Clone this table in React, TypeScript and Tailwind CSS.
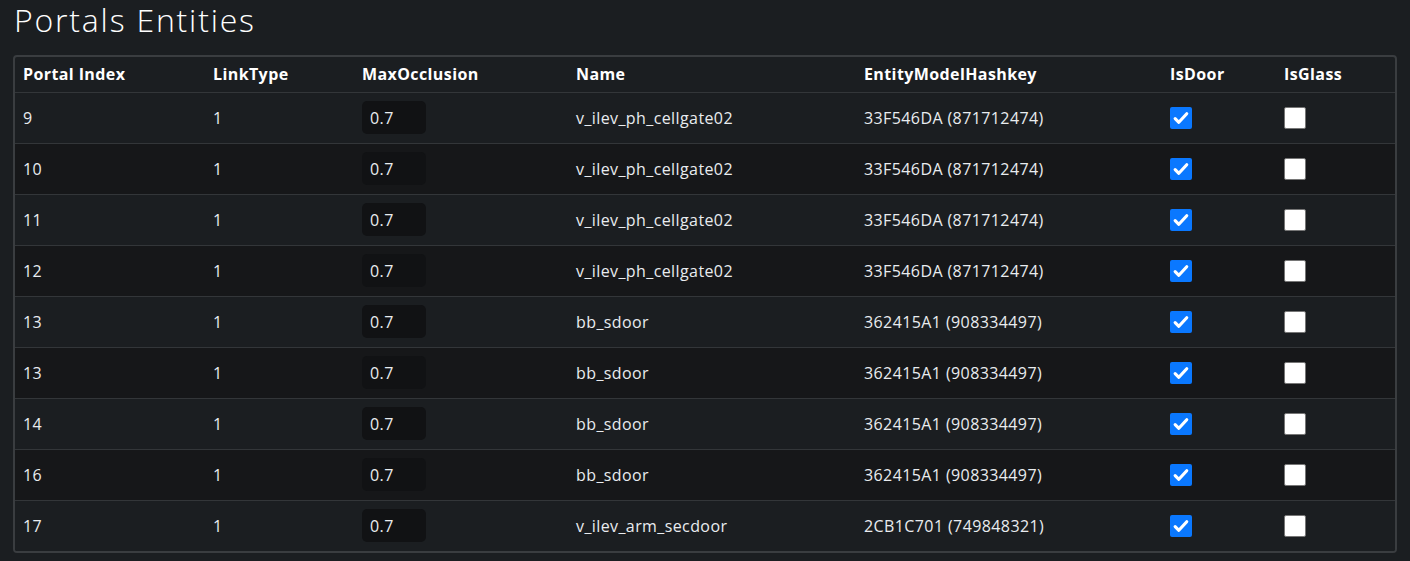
import React from 'react';

type Row = {
  index: number;
  linkType: number;
  occlusion: string;
  name: string;
  hash: string;
  isDoor: boolean;
  isGlass: boolean;
};

const rows: Row[] = [
  { index: 9, linkType: 1, occlusion: '0.7', name: 'v_ilev_ph_cellgate02', hash: '33F546DA (871712474)', isDoor: true, isGlass: false },
  { index: 10, linkType: 1, occlusion: '0.7', name: 'v_ilev_ph_cellgate02', hash: '33F546DA (871712474)', isDoor: true, isGlass: false },
  { index: 11, linkType: 1, occlusion: '0.7', name: 'v_ilev_ph_cellgate02', hash: '33F546DA (871712474)', isDoor: true, isGlass: false },
  { index: 12, linkType: 1, occlusion: '0.7', name: 'v_ilev_ph_cellgate02', hash: '33F546DA (871712474)', isDoor: true, isGlass: false },
  { index: 13, linkType: 1, occlusion: '0.7', name: 'bb_sdoor', hash: '362415A1 (908334497)', isDoor: true, isGlass: false },
  { index: 13, linkType: 1, occlusion: '0.7', name: 'bb_sdoor', hash: '362415A1 (908334497)', isDoor: true, isGlass: false },
  { index: 14, linkType: 1, occlusion: '0.7', name: 'bb_sdoor', hash: '362415A1 (908334497)', isDoor: true, isGlass: false },
  { index: 16, linkType: 1, occlusion: '0.7', name: 'bb_sdoor', hash: '362415A1 (908334497)', isDoor: true, isGlass: false },
  { index: 17, linkType: 1, occlusion: '0.7', name: 'v_ilev_arm_secdoor', hash: '2CB1C701 (749848321)', isDoor: true, isGlass: false },
];

const Check: React.FC<{ checked: boolean }> = ({ checked }) =>
  checked ? (
    <div className="w-[22px] h-[22px] rounded-[2px] bg-[#0a78ff] flex items-center justify-center">
      <svg width="18" height="18" viewBox="0 0 16 16" fill="none">
        <path d="M2.8 8.6l3.3 3.2 7-7.6" stroke="white" strokeWidth="2.8" strokeLinecap="round" strokeLinejoin="round" />
      </svg>
    </div>
  ) : (
    <div className="w-[22px] h-[22px] rounded-[2px] bg-white border border-[#767676]" />
  );

const App: React.FC = () => {
  return (
    <div
      className="min-h-[561px] bg-[#1b1e21] text-[#e9ecef] pl-[13px] pr-[14px] pt-[1px]"
      style={{ fontFamily: '"Open Sans", sans-serif' }}
    >
      <h2 className="ml-[1px] text-[32px] font-light leading-[38px] tracking-[1.8px] text-white">Portals Entities</h2>
      <div className="mt-[16px] w-[1384px] border-2 border-[#3a3d40] rounded-[4px] overflow-hidden">
        <table className="w-full table-fixed border-collapse text-[16px] tracking-[0.4px]">
          <colgroup>
            <col className="w-[190px]" />
            <col className="w-[149px]" />
            <col className="w-[214px]" />
            <col className="w-[288px]" />
            <col className="w-[306px]" />
            <col className="w-[114px]" />
            <col />
          </colgroup>
          <thead>
            <tr className="h-[35px] text-left text-white font-bold">
              <th className="px-2">Portal Index</th>
              <th className="px-2">LinkType</th>
              <th className="px-2">MaxOcclusion</th>
              <th className="px-2">Name</th>
              <th className="px-2">EntityModelHashkey</th>
              <th className="px-2">IsDoor</th>
              <th className="px-2">IsGlass</th>
            </tr>
          </thead>
          <tbody>
            {rows.map((r, i) => (
              <tr
                key={i}
                className={`h-[51px] border-t border-[#333639] ${i % 2 === 1 ? 'bg-[#161719]' : 'bg-[#1b1e21]'}`}
              >
                <td className="px-2">{r.index}</td>
                <td className="px-2">{r.linkType}</td>
                <td className="px-2">
                  <div className="w-[64px] h-[33px] rounded-[5px] bg-[#111214] flex items-center px-2">{r.occlusion}</div>
                </td>
                <td className="px-2">{r.name}</td>
                <td className="px-2">{r.hash}</td>
                <td className="px-2">
                  <Check checked={r.isDoor} />
                </td>
                <td className="px-2">
                  <Check checked={r.isGlass} />
                </td>
              </tr>
            ))}
          </tbody>
        </table>
      </div>
    </div>
  );
};

export default App;
